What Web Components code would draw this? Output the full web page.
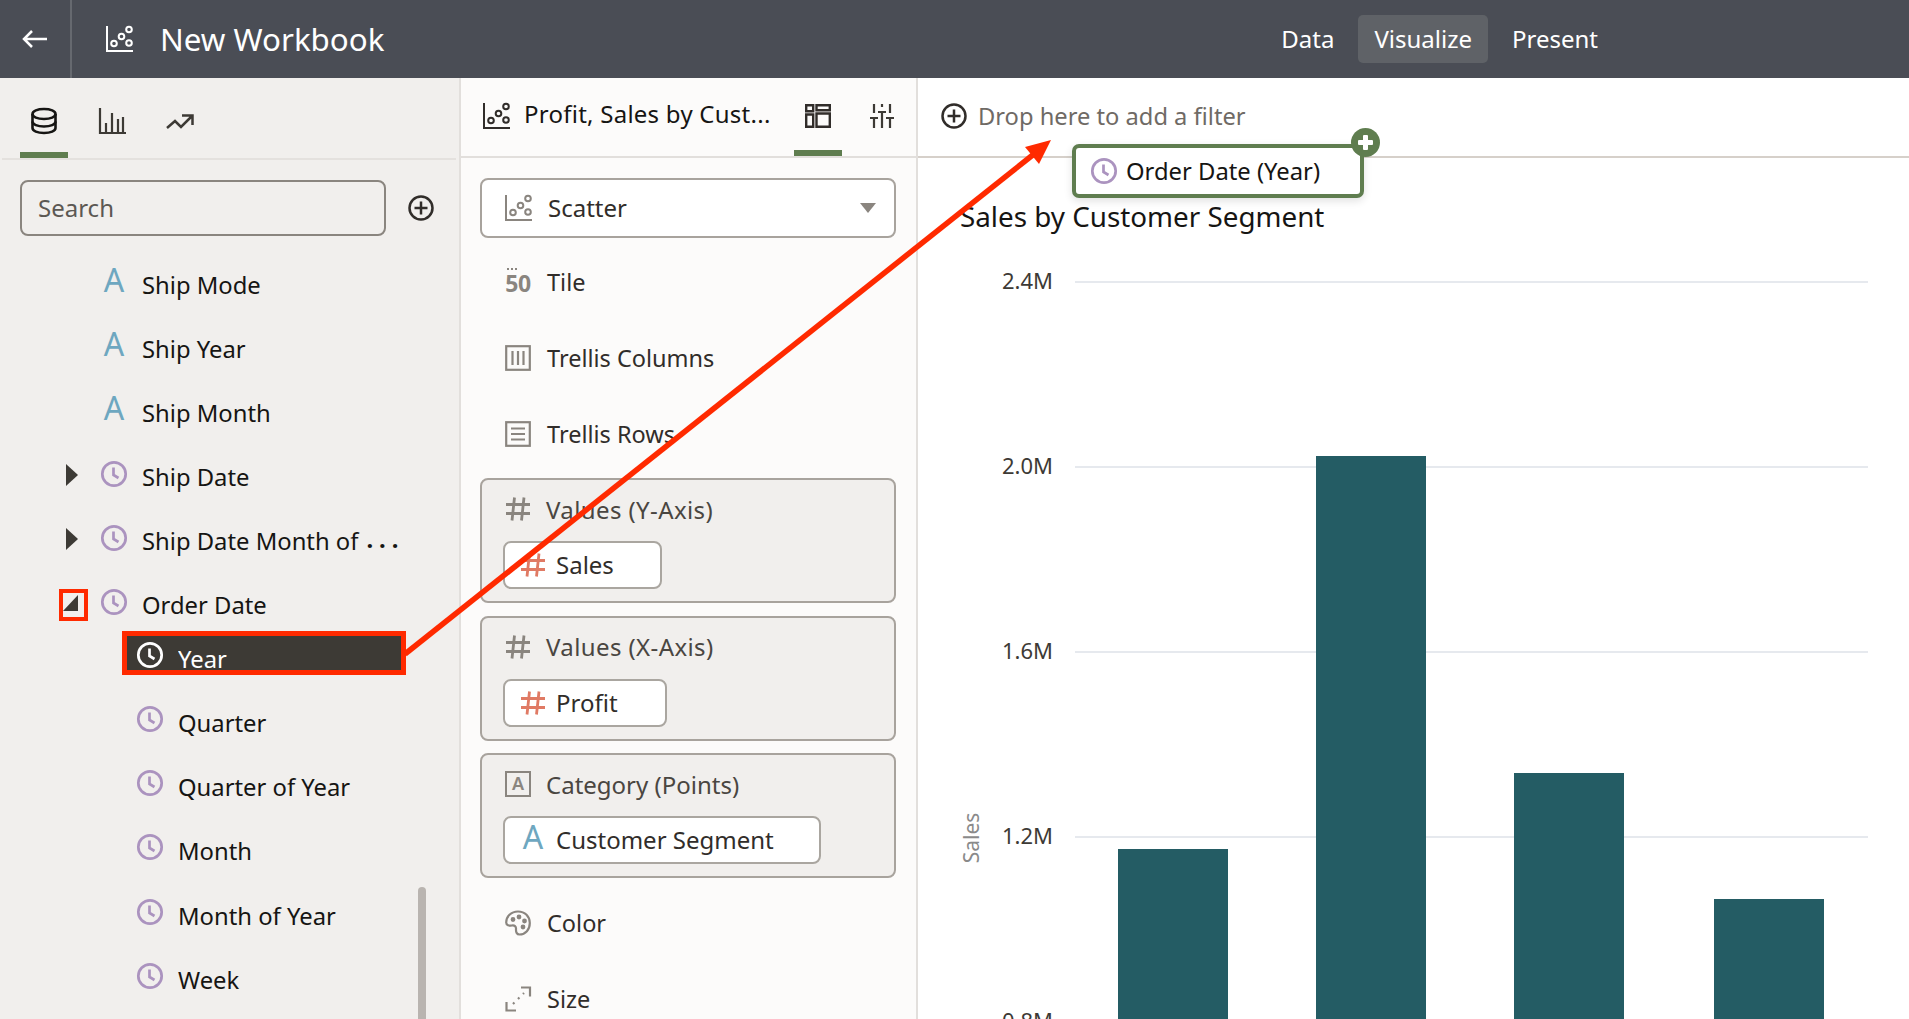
<!DOCTYPE html>
<html lang="en">
<head>
<meta charset="utf-8">
<title>New Workbook</title>
<style>
    html, body { margin: 0; height: 100%; overflow: hidden; background: #fff; }
    body { font-family: "Noto Sans", "Open Sans", sans-serif; }
</style>
</head>
<body>
<workbook-app></workbook-app>

<script>
const ICONS = {
    back: '<path d="M26 13H3M11 5l-8 8 8 8"/>',
    scatter: '<path d="M1 0v25h26"/><circle cx="8" cy="17.500" r="2.800"/><circle cx="15.500" cy="10.500" r="2.800"/><circle cx="23" cy="3.500" r="2.800"/><circle cx="23" cy="17" r="2.800"/>',
    db: '<path d="M1.500 6c0-3 5-5 11.500-5s11.500 2 11.500 5v14c0 3-5 5-11.500 5S1.500 23 1.500 20z"/><path d="M1.500 6c0 3 5 5 11.500 5s11.500-2 11.500-5M1.500 13.500c0 3 5 5 11.500 5s11.500-2 11.500-5"/>',
    bars: '<path d="M1 0v25h26M7 15v9M13 5v19M19 11v13M24 9v15"/>',
    trend: '<path d="M1 20l8-7 6 6 11-11M16 7.500h10.500V17"/>',
    plus: '<circle cx="13" cy="13" r="11.500"/><path d="M13 6.500v13M6.500 13h13"/>',
    clock: '<circle cx="13" cy="13" r="11.700"/><path d="M12.500 6.500v7.500l5 3"/>',
    layout: '<path d="M1.200 1.200h7v6h-7zM11.500 1.200h13.300v5H11.500zM1.200 10.500h7v12.300h-7zM11.500 9.500h13.300v13.300H11.500z"/>',
    sliders: '<path d="M4 0v9M4 14v10M0 14h8M12 0v3M12 8v16M8 8h8M20 0v9M20 14v10M16 14h8"/>',
    columns: '<rect x="1.200" y="1.200" width="23.600" height="23.600"/><path d="M7.500 6v14M13 6v14M18.500 6v14"/>',
    rows: '<rect x="1.200" y="1.200" width="23.600" height="23.600"/><path d="M6 7.500h14M6 13h14M6 18.500h14"/>',
    hash: '<path d="M9.500 1.500L7 24.500M19 1.500l-2.500 23M1 8.500h24M1 17.500h24"/>',
    palette: '<path d="M13 1.500C6 1.500 1.200 6.500 1.200 12.500c0 3 3 3.500 5.500 3 3-.6 4.500 1 4.300 3.500-.2 3 .7 5.500 3.500 5.500 6 0 10.300-5 10.300-11.500S20 1.500 13 1.500z"/><circle cx="8" cy="9.500" r="1.300" fill="currentColor"/><circle cx="14" cy="7" r="1.300" fill="currentColor"/><circle cx="19.500" cy="11" r="1.300" fill="currentColor"/><circle cx="18" cy="17" r="1.300" fill="currentColor"/>',
    size: '<path d="M16 1.500h9v9M1.500 16v8.500H11"/><path d="M8 18l2-2M13 13l2-2M18 8l1-1" stroke-dasharray="2 3"/>'
};

class UiIcon extends HTMLElement {
    connectedCallback() {
        const size = this.getAttribute('size') || 26;
        const height = this.getAttribute('height') || size;
        const weight = this.getAttribute('weight') || 2.2;
        const color = this.getAttribute('color') || 'currentColor';
        const root = this.attachShadow({ mode: 'open' });
        root.innerHTML = `
            <style>
                :host { display: block; flex: none; width: ${size}px; height: ${height}px; color: ${color}; }
                svg { display: block; overflow: visible; }
            </style>
            <svg width="${size}" height="${height}" viewBox="0 0 ${size} ${height}" fill="none"
                 stroke="currentColor" stroke-width="${weight}">${ICONS[this.getAttribute('name')]}</svg>
        `;
    }
}
customElements.define('ui-icon', UiIcon);

class TopBar extends HTMLElement {
    constructor() {
        super();
        this.attachShadow({ mode: 'open' });
        this.shadowRoot.innerHTML = `
            <style>
                :host { display: flex; align-items: center; height: 78px; background: #4a4d55; color: #fff; }
                .back { height: 78px; display: flex; align-items: center; padding-left: 21px; box-sizing: border-box; border-right: 2px solid #66696f; width: 72px; }
                .book { margin-left: 34px; }
                h1 { margin: 0 0 0 28px; font-size: 31.300px; font-weight: 400; line-height: 78px; }
                nav { margin-left: auto; margin-right: 295px; display: flex; align-items: center; font-size: 24px; }
                nav span { padding: 0 16px; height: 48px; line-height: 48px; border-radius: 5px; }
                nav span.on { background: #5f6267; margin: 0 8px; }
            </style>
            <div class="back"><ui-icon name="back" size="26" weight="2.500"></ui-icon></div>
            <ui-icon class="book" name="scatter" weight="2"></ui-icon>
            <h1>New Workbook</h1>
            <nav><span>Data</span><span class="on">Visualize</span><span>Present</span></nav>
        `;
    }
}
customElements.define('top-bar', TopBar);

class TreeRow extends HTMLElement {
    constructor() {
        super();
        this.attachShadow({ mode: 'open' });
    }
    connectedCallback() {
        const kind = this.getAttribute('kind');
        const state = this.getAttribute('state');
        const clockColor = this.hasAttribute('selected') ? '#fff' : '#ab93bf';
        const icon = kind === 'attr'
            ? '<span class="attr">A</span>'
            : `<ui-icon class="clock" name="clock" weight="2.700" color="${clockColor}"></ui-icon>`;
        let toggle = '';
        if (state === 'closed') toggle = '<svg width="29" height="32" viewBox="0 0 29 32"><path d="M7 3l12 11L7 25z" fill="#3d3a35"/></svg>';
        if (state === 'open') toggle = '<svg width="29" height="32" viewBox="0 0 29 32"><path d="M19 6v16H4z" fill="#3d3a35"/></svg>';
        this.shadowRoot.innerHTML = `
            <style>
                :host { display: flex; align-items: center; height: 64px; padding-left: 59px; color: #161513; font-size: 23.800px; }
                :host([level="1"]) { height: 64.200px; padding-left: 137px; }
                .toggle { width: 29px; height: 32px; margin-right: 13px; flex: none; position: relative; }
                .toggle.mark::after { content: ""; position: absolute; inset: 0; border: 4.500px solid #ff2a00; }
                .attr { display: block; width: 26px; height: 34px; margin-top: -10px; text-align: center; font-size: 32px; line-height: 34px; color: #6ea7c0; }
                .clock { margin-top: -5px; }
                :host([level="1"]) .clock { margin-top: -8px; }
                .label { margin-left: 15px; white-space: nowrap; }
                .more { margin-left: 8px; font-weight: 700; letter-spacing: 6px; margin-top: -4px; }
                :host([selected]) { width: 264px; height: 34px; margin: -.6px 0 21px 127px; padding-left: 10px; background: #3d3a35; color: #fff; outline: 5px solid #ff2a00; align-items: flex-start; }
                :host([selected]) .clock { margin-top: 6px; }
                :host([selected]) .label { height: 34px; line-height: 46px; overflow: hidden; }
            </style>
            ${this.getAttribute('level') === '1' ? '' : `<div class="toggle ${this.hasAttribute('marked') ? 'mark' : ''}">${toggle}</div>`}
            ${icon}
            <span class="label"><slot></slot></span>
            ${this.hasAttribute('more') ? '<span class="more">...</span>' : ''}
        `;
    }
}
customElements.define('tree-row', TreeRow);

class DataPanel extends HTMLElement {
    constructor() {
        super();
        this.attachShadow({ mode: 'open' });
        this.shadowRoot.innerHTML = `
            <style>
                :host { display: flex; flex-direction: column; background: #f1efed; border-right: 2px solid #e2dfdc; overflow: hidden; position: relative; }
                .tabs { display: flex; height: 80px; border-bottom: 2px solid #e4e1de; margin: 0 3px 0 2px; padding-left: 18px; flex: none; }
                .tab { width: 48px; height: 74px; margin-right: 20px; padding-top: 30px; box-sizing: border-box; display: flex; justify-content: center; }
                .tab.on { height: 80px; border-bottom: 6px solid #5f7d4f; }
                .tab.trend { margin-left: -1px; }
                .find { display: flex; align-items: center; padding: 20px 0 0 20px; flex: none; }
                .box { width: 366px; height: 56px; box-sizing: border-box; border: 2px solid #8a857f; border-radius: 8px; padding-left: 16px; line-height: 52px; font-size: 24px; color: #5c5853; }
                .find ui-icon { margin-left: 22px; }
                .list { padding-top: 16.600px; }
                .thumb { position: absolute; left: 418px; top: 809px; width: 8px; height: 140px; border-radius: 4px; background: #b9b4b0; }
            </style>
            <div class="tabs">
                <div class="tab on"><ui-icon name="db" color="#161513" weight="2.600"></ui-icon></div>
                <div class="tab"><ui-icon name="bars" color="#3d3a35"></ui-icon></div>
                <div class="tab trend"><ui-icon name="trend" color="#3d3a35" weight="2.500"></ui-icon></div>
            </div>
            <div class="find">
                <div class="box">Search</div>
                <ui-icon name="plus" color="#312d2a" weight="2.500"></ui-icon>
            </div>
            <div class="list"><slot></slot></div>
            <div class="thumb"></div>
        `;
    }
}
customElements.define('data-panel', DataPanel);

class GrammarRow extends HTMLElement {
    constructor() {
        super();
        this.attachShadow({ mode: 'open' });
    }
    connectedCallback() {
        this.shadowRoot.innerHTML = `
            <style>
                :host { display: flex; align-items: center; height: 76px; padding-left: 44px; gap: 16px; font-size: 23.500px; color: #312d2a; }
                :host([short]) { height: 64px; margin-bottom: 12px; }
            </style>
            <slot name="icon"></slot>
            <span><slot></slot></span>
        `;
    }
}
customElements.define('grammar-row', GrammarRow);

class ValueWell extends HTMLElement {
    constructor() {
        super();
        this.attachShadow({ mode: 'open' });
        this.shadowRoot.innerHTML = `
            <style>
                :host { display: block; height: 125px; margin: 0 20px 12.500px 19px; box-sizing: border-box; border: 2px solid #a8a39d; border-radius: 8px; background: #f1efed; padding: 8px 21px; font-size: 24px; color: #4a4641; }
                .head { display: flex; align-items: center; height: 42px; gap: 15px; padding-left: 2px; margin-bottom: 11px; }
            </style>
            <div class="head"><slot name="icon"></slot><span><slot name="title"></slot></span></div>
            <slot></slot>
        `;
    }
}
customElements.define('value-well', ValueWell);

class DataPill extends HTMLElement {
    constructor() {
        super();
        this.attachShadow({ mode: 'open' });
        this.shadowRoot.innerHTML = `
            <style>
                :host { display: flex; align-items: center; height: 48px; box-sizing: border-box; border: 2px solid #aaa6a0; border-radius: 8px; background: #fff; padding-left: 15px; gap: 10px; font-size: 24px; color: #312d2a; }
                span { margin-bottom: 1px; }
            </style>
            <slot name="icon"></slot><span><slot></slot></span>
        `;
    }
}
customElements.define('data-pill', DataPill);

class GrammarPanel extends HTMLElement {
    constructor() {
        super();
        this.attachShadow({ mode: 'open' });
        this.shadowRoot.innerHTML = `
            <style>
                :host { display: block; background: #fcfbfa; border-right: 2px solid #e2dfdc; overflow: hidden; }
                .head { display: flex; align-items: center; height: 78px; border-bottom: 2px solid #e2dfdc; box-sizing: content-box; padding-left: 22px; font-size: 24px; color: #161513; position: relative; }
                .head > ui-icon:first-child { margin-top: -2px; }
                .name { margin: 0 0 8px 15px; width: 260px; white-space: nowrap; letter-spacing: .25px; }
                .tab { position: absolute; left: 333px; top: 72px; width: 48px; height: 6px; background: #5f7d4f; }
                .head .a { position: absolute; left: 344px; top: 26px; }
                .head .b { position: absolute; left: 409px; top: 26px; }
                .type { display: flex; align-items: center; height: 60px; margin: 20px 20px 0 19px; box-sizing: border-box; border: 2px solid #a8a39d; border-radius: 8px; background: #fff; padding-left: 23px; font-size: 24px; color: #312d2a; }
                .type span { margin: 0 0 2px 17px; }
                .caret { margin-left: auto; margin-right: 18px; width: 0; height: 0; border-left: 8px solid transparent; border-right: 8px solid transparent; border-top: 10px solid #8a857f; }
                .rows { padding-top: 6px; }
            </style>
            <div class="head">
                <ui-icon name="scatter" color="#312d2a" weight="2"></ui-icon>
                <span class="name">Profit, Sales by Cust...</span>
                <ui-icon class="a" name="layout" height="24" color="#312d2a" weight="2.400"></ui-icon>
                <ui-icon class="b" name="sliders" size="24" color="#3d3a35" weight="2.200"></ui-icon>
                <div class="tab"></div>
            </div>
            <div class="type">
                <ui-icon name="scatter" color="#8a857f" weight="2"></ui-icon>
                <span>Scatter</span>
                <div class="caret"></div>
            </div>
            <div class="rows"><slot></slot></div>
        `;
    }
}
customElements.define('grammar-panel', GrammarPanel);

class ChartView extends HTMLElement {
    constructor() {
        super();
        this.attachShadow({ mode: 'open' });
        const ticks = [['2.4M', 124], ['2.0M', 309], ['1.6M', 494], ['1.2M', 679], ['0.8M', 864]];
        const bars = [[200, 691], [398, 298], [596, 615], [796, 741]];
        const grid = ticks.map(([label, y]) => `
            <line x1="157" x2="950" y1="${y}" y2="${y}" stroke="#e6e9ee" stroke-width="2"/>
            <text x="135" y="${y + 6.5}" text-anchor="end" font-size="22" fill="#3d3a35">${label}</text>
        `).join('');
        const cols = bars.map(([x, y]) => `<rect x="${x}" y="${y}" width="110" height="${861 - y}" fill="#245c64"/>`).join('');
        this.shadowRoot.innerHTML = `
            <style>
                :host { display: block; flex: 1; min-height: 0; overflow: hidden; }
                svg { display: block; font-family: "Noto Sans", "Open Sans", sans-serif; }
            </style>
            <svg width="991" height="861" viewBox="0 0 991 861">
                <text x="42" y="69" font-size="27.800" fill="#161513">Sales by Customer Segment</text>
                ${grid}
                ${cols}
                <text transform="translate(61 680) rotate(-90)" text-anchor="middle" font-size="21" fill="#8a8a8a">Sales</text>
            </svg>
        `;
    }
}
customElements.define('chart-view', ChartView);

class CanvasPanel extends HTMLElement {
    constructor() {
        super();
        this.attachShadow({ mode: 'open' });
        this.shadowRoot.innerHTML = `
            <style>
                :host { display: flex; flex-direction: column; background: #fff; overflow: hidden; }
                .filter { display: flex; align-items: center; gap: 11px; height: 78px; flex: none; padding-left: 23px; border-bottom: 2px solid #d6d0ca; font-size: 23.700px; color: #6f6a65; }
                .filter ui-icon { margin-bottom: 2px; }
                .filter span { margin-bottom: 3px; }
            </style>
            <div class="filter">
                <ui-icon name="plus" color="#312d2a" weight="2.500"></ui-icon>
                <span>Drop here to add a filter</span>
            </div>
            <chart-view></chart-view>
        `;
    }
}
customElements.define('canvas-panel', CanvasPanel);

class DragGhost extends HTMLElement {
    constructor() {
        super();
        this.attachShadow({ mode: 'open' });
        this.shadowRoot.innerHTML = `
            <style>
                :host { position: absolute; left: 1072px; top: 144px; width: 292px; height: 54px; box-sizing: border-box; display: flex; align-items: center; gap: 9px; padding-left: 14px; border: 4px solid #5f7d4f; border-radius: 7px; background: #fff; box-shadow: 0 3px 8px rgba(0, 0, 0, .12); font-size: 23.800px; color: #161513; }
                span { margin-bottom: 1px; }
                ui-icon { margin-left: 1px; }
                .badge { position: absolute; right: -20px; top: -20px; width: 29px; height: 29px; border-radius: 50%; background: #5f7d4f; }
                .badge::before, .badge::after { content: ""; position: absolute; background: #fff; border-radius: 1px; }
                .badge::before { left: 7px; top: 12px; width: 15px; height: 5px; }
                .badge::after { left: 12px; top: 7px; width: 5px; height: 15px; }
            </style>
            <ui-icon name="clock" weight="2.700" color="#ab93bf"></ui-icon>
            <span><slot></slot></span>
            <div class="badge"></div>
        `;
    }
}
customElements.define('drag-ghost', DragGhost);

class WorkbookApp extends HTMLElement {
    constructor() {
        super();
        this.attachShadow({ mode: 'open' });
        this.shadowRoot.innerHTML = `
            <style>
                :host { display: grid; grid-template-columns: 461px 457px 1fr; grid-template-rows: 78px 1fr; width: 1909px; height: 1019px; position: relative; overflow: hidden; font-family: "Noto Sans", "Open Sans", sans-serif; }
                top-bar { grid-column: 1 / -1; }
                .tile { display: block; width: 26px; height: 24px; text-align: center; font-size: 23px; font-weight: 700; color: #8a857f; line-height: 22px; padding-top: 4px; letter-spacing: -.5px; position: relative; }
                .tile::before { content: ""; position: absolute; left: 2px; top: 0; width: 12px; height: 2px; background: repeating-linear-gradient(90deg, #8a857f 0 2px, transparent 2px 4px); }
                .sq { display: block; box-sizing: border-box; width: 26px; height: 26px; border: 2.400px solid #8a857f; text-align: center; font-size: 18px; font-weight: 600; line-height: 21px; color: #8a857f; }
                .a { display: block; width: 26px; text-align: center; font-size: 32px; line-height: 34px; color: #6ea7c0; }
                .wide { letter-spacing: .4px; }
                .arrow { position: absolute; left: 0; top: 0; pointer-events: none; }
            </style>
            <top-bar></top-bar>
            <data-panel>
                <tree-row kind="attr">Ship Mode</tree-row>
                <tree-row kind="attr">Ship Year</tree-row>
                <tree-row kind="attr">Ship Month</tree-row>
                <tree-row kind="time" state="closed">Ship Date</tree-row>
                <tree-row kind="time" state="closed" more>Ship Date Month of</tree-row>
                <tree-row kind="time" state="open" marked>Order Date</tree-row>
                <tree-row kind="time" level="1" selected>Year</tree-row>
                <tree-row kind="time" level="1">Quarter</tree-row>
                <tree-row kind="time" level="1">Quarter of Year</tree-row>
                <tree-row kind="time" level="1">Month</tree-row>
                <tree-row kind="time" level="1">Month of Year</tree-row>
                <tree-row kind="time" level="1">Week</tree-row>
            </data-panel>
            <grammar-panel>
                <grammar-row><span slot="icon" class="tile">50</span>Tile</grammar-row>
                <grammar-row><ui-icon slot="icon" name="columns" color="#8a857f"></ui-icon>Trellis Columns</grammar-row>
                <grammar-row><ui-icon slot="icon" name="rows" color="#8a857f"></ui-icon>Trellis Rows</grammar-row>
                <div style="height:6px"></div>
                <value-well>
                    <ui-icon slot="icon" name="hash" color="#8a857f" weight="2.800"></ui-icon>
                    <span slot="title" class="wide">Values (Y-Axis)</span>
                    <data-pill style="width:159px"><ui-icon slot="icon" name="hash" size="26" color="#e07a64" weight="2.800"></ui-icon>Sales</data-pill>
                </value-well>
                <value-well>
                    <ui-icon slot="icon" name="hash" color="#8a857f" weight="2.800"></ui-icon>
                    <span slot="title" class="wide">Values (X-Axis)</span>
                    <data-pill style="width:164px"><ui-icon slot="icon" name="hash" size="26" color="#e07a64" weight="2.800"></ui-icon>Profit</data-pill>
                </value-well>
                <value-well>
                    <span slot="icon" class="sq">A</span>
                    <span slot="title">Category (Points)</span>
                    <data-pill style="width:318px"><span slot="icon" class="a" style="margin-top:-6px">A</span>Customer Segment</data-pill>
                </value-well>
                <grammar-row short><ui-icon slot="icon" name="palette" color="#8a857f"></ui-icon>Color</grammar-row>
                <grammar-row short><ui-icon slot="icon" name="size" color="#8a857f"></ui-icon>Size</grammar-row>
            </grammar-panel>
            <canvas-panel></canvas-panel>
            <svg class="arrow" width="1909" height="1019" viewBox="0 0 1909 1019">
                <line x1="405" y1="654" x2="1034" y2="154" stroke="#ff2a00" stroke-width="5.500"/>
                <polygon points="1051,140 1025,147 1039,164" fill="#ff2a00"/>
            </svg>
            <drag-ghost>Order Date (Year)</drag-ghost>
        `;
    }
}
customElements.define('workbook-app', WorkbookApp);
</script>
</body>
</html>
